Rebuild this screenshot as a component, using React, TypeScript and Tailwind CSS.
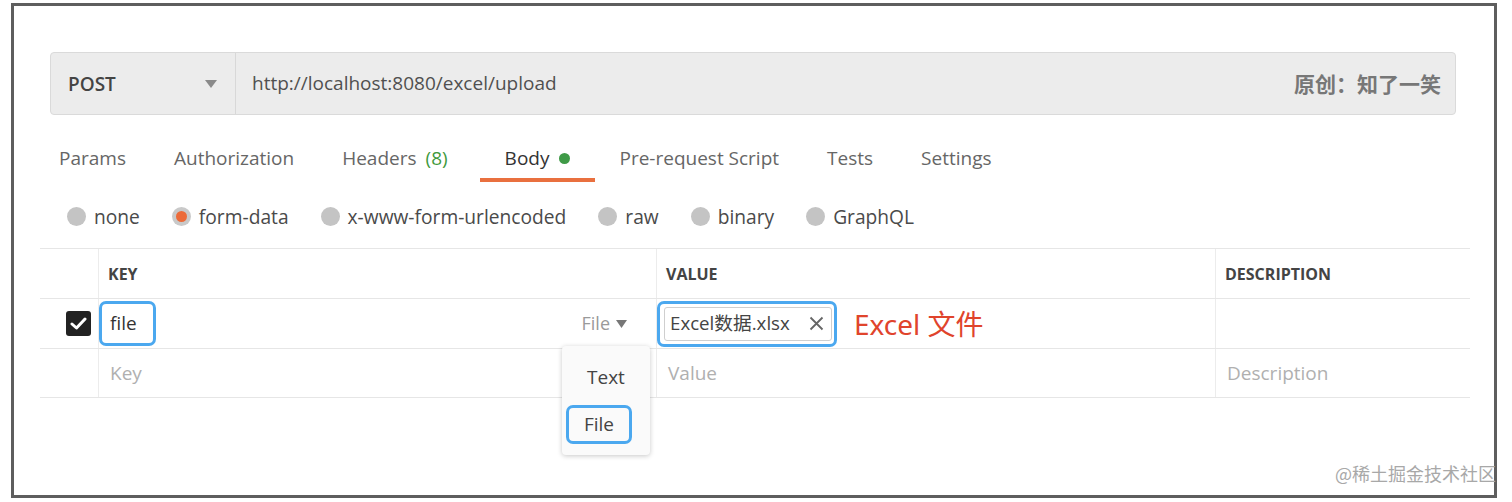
import React from "react";

const font = { fontFamily: '"Open Sans", "Noto Sans", "Noto Sans CJK SC", sans-serif' };

function Radio({ label, selected }: { label: string; selected?: boolean }) {
  return (
    <div className="flex items-center">
      {selected ? (
        <span className="w-[19px] h-[19px] rounded-full bg-[#c9c9c9] flex items-center justify-center">
          <span className="w-[11px] h-[11px] rounded-full bg-[#ec6b3a]" />
        </span>
      ) : (
        <span className="w-[19px] h-[19px] rounded-full bg-[#c4c4c4]" />
      )}
      <span className="ml-[8px] text-[19.2px] text-[#4a4a4a] leading-none">{label}</span>
    </div>
  );
}

function Tab({ children, active, extra }: { children: React.ReactNode; active?: boolean; extra?: string }) {
  return (
    <div className={"px-[24px] h-[50px] flex items-center relative " + (active ? "text-[#333] " : "text-[#666] ") + (extra || "")}>
      <span className="text-[19px] leading-none flex items-center">{children}</span>
      {active && <span className="absolute left-0 right-0 bottom-[1px] h-[4px] bg-[#e9703f]" />}
    </div>
  );
}

export default function App() {
  return (
    <div className="w-[1512px] h-[502px] bg-white relative overflow-hidden" style={font}>
      <div className="absolute left-[11px] top-[3px] w-[1486px] h-[495px] border-[3px] border-[#5e5e5e] box-border">
        <div className="pt-[46px] pl-[36px]">
          {/* URL bar */}
          <div className="w-[1406px] h-[63px] bg-[#ececec] border border-[#dadada] rounded-[4px] flex items-center">
            <div className="w-[185px] h-full border-r border-[#d8d8d8] flex items-center pl-[17px] pr-[18px] justify-between">
              <span className="text-[19px] font-semibold text-[#444] mt-[2px]">POST</span>
              <svg width="12" height="8" viewBox="0 0 12 8"><path d="M0 0 L12 0 L6 8 Z" fill="#8a8a8a" /></svg>
            </div>
            <div className="flex-1 flex items-center justify-between pl-[16px] pr-[14px]">
              <span className="text-[19px] text-[#505050]">http://localhost:8080/excel/upload</span>
              <span className="text-[21px] font-bold text-[#777]" style={{ fontFamily: '"Noto Sans CJK SC", sans-serif' }}>原创：知了一笑</span>
            </div>
          </div>
        </div>

        {/* tabs */}
        <div className="flex mt-[18px] ml-[21px]">
          <Tab>Params</Tab>
          <Tab>Authorization</Tab>
          <Tab>Headers <span className="ml-[9px] text-[#3f9a3d]">(8)</span></Tab>
          <Tab active extra="ml-[8px] pl-[25px] pr-[25px]">Body <span className="ml-[10px] w-[11px] h-[11px] rounded-full bg-[#3f9a47] inline-block" /></Tab>
          <Tab>Pre-request Script</Tab>
          <Tab>Tests</Tab>
          <Tab>Settings</Tab>
        </div>

        {/* radios */}
        <div className="flex items-center gap-[32px] ml-[53px] h-[65px] pt-[3px]">
          <Radio label="none" />
          <Radio label="form-data" selected />
          <Radio label="x-www-form-urlencoded" />
          <Radio label="raw" />
          <Radio label="binary" />
          <Radio label="GraphQL" />
        </div>

        {/* table */}
        <div className="ml-[26px] w-[1430px] border-t border-b border-[#e6e6e6]">
          <div className="flex h-[50px] border-b border-[#e6e6e6]">
            <div className="w-[59px] border-r border-[#ececec]" />
            <div className="w-[558px] border-r border-[#ececec] flex items-center pl-[9px] text-[16px] font-bold text-[#444]">KEY</div>
            <div className="w-[559px] border-r border-[#ececec] flex items-center pl-[9px] text-[16px] font-bold text-[#444]">VALUE</div>
            <div className="flex-1 flex items-center pl-[9px] text-[16px] font-bold text-[#444]">DESCRIPTION</div>
          </div>
          <div className="flex h-[50px] border-b border-[#e6e6e6]">
            <div className="w-[59px] border-r border-[#ececec] flex items-center justify-end pr-[7px]">
              <span className="w-[25px] h-[25px] rounded-[3px] bg-[#222] flex items-center justify-center">
                <svg width="17" height="13" viewBox="0 0 17 13"><path d="M2 7 L6.5 11 L15 2" stroke="#fff" strokeWidth="3" fill="none" strokeLinecap="round" strokeLinejoin="round" /></svg>
              </span>
            </div>
            <div className="w-[558px] border-r border-[#ececec] flex items-center justify-between pr-[29px]">
              <span className="h-[45px] w-[57px] border-[3.5px] border-[#4ba8ef] rounded-[7px] flex items-center pl-[8px] text-[19px] text-[#333]">file</span>
              <span className="flex items-center text-[18px] text-[#9a9a9a]">File
                <svg className="ml-[6px]" width="11" height="8" viewBox="0 0 11 8"><path d="M0 0 L11 0 L5.5 8 Z" fill="#777" /></svg>
              </span>
            </div>
            <div className="w-[559px] border-r border-[#ececec] flex items-center">
              <div className="h-[46px] w-[180px] border-[3.5px] border-[#4ba8ef] rounded-[7px] flex items-center pl-[4px]">
                <div className="h-[34px] w-[168px] border border-[#cfcfcf] rounded-[3px] bg-white flex items-center justify-between pl-[5px] pr-[7px]">
                  <span className="text-[18.7px] text-[#444]" style={{ fontFamily: '"Open Sans", "Noto Sans CJK SC", sans-serif' }}>Excel数据.xlsx</span>
                  <svg width="15" height="15" viewBox="0 0 15 15"><path d="M1.5 1.5 L13.5 13.5 M13.5 1.5 L1.5 13.5" stroke="#666" strokeWidth="1.8" /></svg>
                </div>
              </div>
              <span className="ml-[17px] text-[28px] text-[#e0442c]" style={{ fontFamily: '"Noto Sans", "Noto Sans CJK SC", sans-serif' }}>Excel 文件</span>
            </div>
            <div className="flex-1" />
          </div>
          <div className="flex h-[48px]">
            <div className="w-[59px] border-r border-[#ececec]" />
            <div className="w-[558px] border-r border-[#ececec] flex items-center pl-[11px] text-[19px] text-[#b0b0b0]">Key</div>
            <div className="w-[559px] border-r border-[#ececec] flex items-center pl-[11px] text-[19px] text-[#b0b0b0]">Value</div>
            <div className="flex-1 flex items-center pl-[11px] text-[19px] text-[#b0b0b0]">Description</div>
          </div>
        </div>
      </div>

      {/* dropdown menu overlay */}
      <div className="absolute left-[562px] top-[346px] w-[88px] h-[109px] bg-[#fafafa] rounded-[4px] shadow-[0_1px_5px_rgba(0,0,0,0.22)] flex flex-col pt-[14px]">
        <span className="text-[19px] text-[#444] leading-none mt-[8px] ml-[25px]">Text</span>
        <span className="mt-[18px] ml-[4px] w-[66px] h-[39px] border-[3.5px] border-[#4ba8ef] rounded-[7px] flex items-center justify-center text-[19px] text-[#444]">File</span>
      </div>

      {/* watermark */}
      <span className="absolute right-[16px] top-[464px] text-[18px] text-[#a8a8a8] leading-none" style={{ fontFamily: '"Noto Sans CJK SC", sans-serif' }}>@稀土掘金技术社区</span>
    </div>
  );
}
